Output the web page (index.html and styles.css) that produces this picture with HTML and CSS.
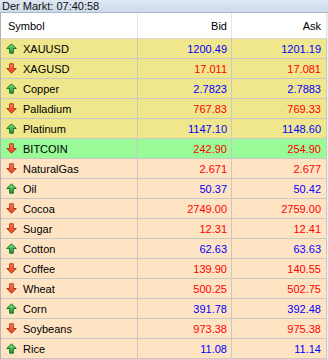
FILE: index.html
```html
<!DOCTYPE html>
<html lang="de">
<head>
  <meta charset="UTF-8" />
  <meta name="viewport" content="width=device-width, initial-scale=1.0"/>
  <title>Der Markt</title>
  <link rel="stylesheet" href="styles.css">
</head>
<body>
<svg width="0" height="0" class="defs">
  <defs>
    <linearGradient id="gUp" x1="0" y1="0" x2="0" y2="1">
      <stop offset="0" stop-color="#7ee07e"/>
      <stop offset="1" stop-color="#1f9a2a"/>
    </linearGradient>
    <linearGradient id="gDown" x1="0" y1="0" x2="0" y2="1">
      <stop offset="0" stop-color="#ff8a5a"/>
      <stop offset="1" stop-color="#e0401a"/>
    </linearGradient>
    <symbol id="up" viewBox="0 0 11 11">
      <polygon points="5.5,0.8 10.2,5.5 7.3,5.5 7.3,10.2 3.7,10.2 3.7,5.5 0.8,5.5" fill="url(#gUp)" stroke="#17702a" stroke-width="1" stroke-linejoin="round"/>
    </symbol>
    <symbol id="down" viewBox="0 0 11 11">
      <polygon points="5.5,10.2 10.2,5.5 7.3,5.5 7.3,0.8 3.7,0.8 3.7,5.5 0.8,5.5" fill="url(#gDown)" stroke="#b23214" stroke-width="1" stroke-linejoin="round"/>
    </symbol>
  </defs>
</svg>

<div class="title">Der Markt: 07:40:58</div>

<div class="grid">
  <div class="row head">
    <div class="cell sym">Symbol</div>
    <div class="cell num">Bid</div>
    <div class="cell num ask">Ask</div>
  </div>

  <div class="row metal">
    <div class="cell sym"><svg class="ico"><use href="#up"/></svg>XAUUSD</div>
    <div class="cell num blue">1200.49</div>
    <div class="cell num ask blue">1201.19</div>
  </div>
  <div class="row metal">
    <div class="cell sym"><svg class="ico"><use href="#down"/></svg>XAGUSD</div>
    <div class="cell num red">17.011</div>
    <div class="cell num ask red">17.081</div>
  </div>
  <div class="row metal">
    <div class="cell sym"><svg class="ico"><use href="#up"/></svg>Copper</div>
    <div class="cell num blue">2.7823</div>
    <div class="cell num ask blue">2.7883</div>
  </div>
  <div class="row metal">
    <div class="cell sym"><svg class="ico"><use href="#down"/></svg>Palladium</div>
    <div class="cell num red">767.83</div>
    <div class="cell num ask red">769.33</div>
  </div>
  <div class="row metal">
    <div class="cell sym"><svg class="ico"><use href="#up"/></svg>Platinum</div>
    <div class="cell num blue">1147.10</div>
    <div class="cell num ask blue">1148.60</div>
  </div>
  <div class="row crypto">
    <div class="cell sym"><svg class="ico"><use href="#down"/></svg>BITCOIN</div>
    <div class="cell num red">242.90</div>
    <div class="cell num ask red">254.90</div>
  </div>
  <div class="row soft">
    <div class="cell sym"><svg class="ico"><use href="#down"/></svg>NaturalGas</div>
    <div class="cell num red">2.671</div>
    <div class="cell num ask red">2.677</div>
  </div>
  <div class="row soft">
    <div class="cell sym"><svg class="ico"><use href="#up"/></svg>Oil</div>
    <div class="cell num blue">50.37</div>
    <div class="cell num ask blue">50.42</div>
  </div>
  <div class="row soft">
    <div class="cell sym"><svg class="ico"><use href="#down"/></svg>Cocoa</div>
    <div class="cell num red">2749.00</div>
    <div class="cell num ask red">2759.00</div>
  </div>
  <div class="row soft">
    <div class="cell sym"><svg class="ico"><use href="#down"/></svg>Sugar</div>
    <div class="cell num red">12.31</div>
    <div class="cell num ask red">12.41</div>
  </div>
  <div class="row soft">
    <div class="cell sym"><svg class="ico"><use href="#up"/></svg>Cotton</div>
    <div class="cell num blue">62.63</div>
    <div class="cell num ask blue">63.63</div>
  </div>
  <div class="row soft">
    <div class="cell sym"><svg class="ico"><use href="#down"/></svg>Coffee</div>
    <div class="cell num red">139.90</div>
    <div class="cell num ask red">140.55</div>
  </div>
  <div class="row soft">
    <div class="cell sym"><svg class="ico"><use href="#down"/></svg>Wheat</div>
    <div class="cell num red">500.25</div>
    <div class="cell num ask red">502.75</div>
  </div>
  <div class="row soft">
    <div class="cell sym"><svg class="ico"><use href="#up"/></svg>Corn</div>
    <div class="cell num blue">391.78</div>
    <div class="cell num ask blue">392.48</div>
  </div>
  <div class="row soft">
    <div class="cell sym"><svg class="ico"><use href="#down"/></svg>Soybeans</div>
    <div class="cell num red">973.38</div>
    <div class="cell num ask red">975.38</div>
  </div>
  <div class="row soft">
    <div class="cell sym"><svg class="ico"><use href="#up"/></svg>Rice</div>
    <div class="cell num blue">11.08</div>
    <div class="cell num ask blue">11.14</div>
  </div>
</div>
</body>
</html>
```

FILE: styles.css
```css
* { box-sizing: border-box; }
body {
  margin: 0;
  font-family: 'Liberation Sans', Arial, sans-serif;
  font-size: 11px;
  color: #000;
  background: #f0f0f0;
  overflow: hidden;
}
.defs { position: absolute; }
.title {
  height: 13px;
  line-height: 12px;
  padding-left: 2px;
  background: linear-gradient(to bottom, #dde8f3, #cddbea);
  border-bottom: 1px solid #a9b8c8;
  color: #101010;
}
.grid {
  width: 327px;
  border-left: 1px solid #b4b4b4;
}
.row {
  display: grid;
  grid-template-columns: 137px 94px 95px;
  height: 20px;
  border-bottom: 1px solid #c8c8c8;
}
.row.head {
  height: 26px;
  background: #fff;
  border-bottom: 1px solid #d8d8d8;
}
.metal { background: #f0e68c; }
.crypto { background: #98fb98; }
.soft { background: #ffe4c4; }
.cell {
  display: flex;
  align-items: center;
  border-right: 1px solid #c8c8c8;
  white-space: nowrap;
}
.head .cell { border-right-color: #e6e6e6; }
.sym { padding-left: 5px; }
.head .sym { padding-left: 7px; }
.num {
  justify-content: flex-end;
  padding-right: 4px;
}
.num.ask { padding-right: 5px; }
.ico {
  width: 11px;
  height: 11px;
  margin-right: 6px;
  flex: none;
}
.blue { color: #0000ff; }
.red { color: #ff0000; }
```
